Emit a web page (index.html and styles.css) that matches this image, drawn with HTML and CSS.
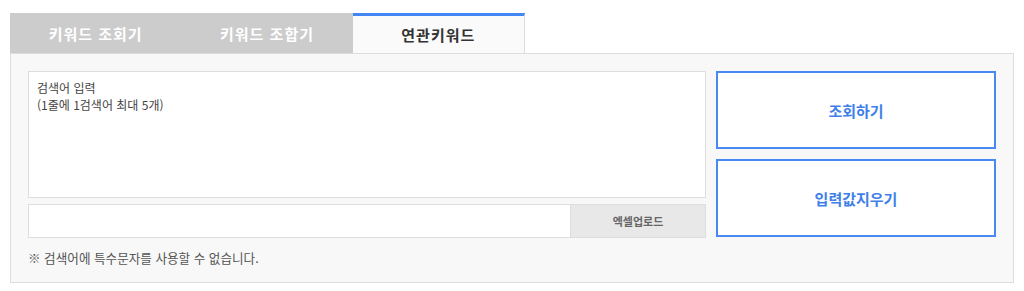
FILE: index.html
```html
<!DOCTYPE html>
<html lang="ko">
<head>
<meta charset="utf-8">
<link rel="stylesheet" href="styles.css">
</head>
<body>
<div class="wrap">
  <div class="tabs">
    <div class="tab">키워드 조회기</div>
    <div class="tab">키워드 조합기</div>
    <div class="tab active">연관키워드</div>
  </div>
  <div class="panel">
    <div class="row">
      <div class="left">
        <textarea class="keywords" placeholder="검색어 입력&#10;(1줄에 1검색어 최대 5개)"></textarea>
        <div class="upload">
          <div class="file"></div>
          <div class="excel">엑셀업로드</div>
        </div>
      </div>
      <div class="right">
        <div class="btn">조회하기</div>
        <div class="btn">입력값지우기</div>
      </div>
    </div>
    <p class="notice">※ 검색어에 특수문자를 사용할 수 없습니다.</p>
  </div>
</div>
</body>
</html>
```
FILE: styles.css
```css
* { box-sizing: border-box; }
html, body { margin: 0; padding: 0; background: #fff; }
body { font-family: "Noto Sans CJK KR", "Noto Sans", sans-serif; color: #444; }
.wrap { padding: 13px 10px 0 10px; }
.tabs { display: flex; width: 515px; height: 40px; }
.tab {
  flex: 1;
  background: #cccccc;
  color: #fff;
  font-size: 15px;
  font-weight: 700;
  display: flex;
  align-items: center;
  justify-content: center;
  letter-spacing: 1px;
}
.tab.active {
  background: #fafafa;
  color: #333;
  border-top: 3px solid #4285f4;
  border-right: 1px solid #dddddd;
}
.panel {
  width: 1004px;
  height: 230px;
  background: #f8f8f8;
  border: 1px solid #dddddd;
  padding: 17px 17px 0 17px;
}
.row { display: flex; gap: 10px; }
.left { width: 678px; display: flex; flex-direction: column; gap: 6px; }
.keywords {
  display: block;
  width: 100%;
  height: 127px;
  margin: 0;
  border: 1px solid #dddddd;
  background: #fff;
  resize: none;
  padding: 7px 8px;
  font-family: "Noto Sans CJK KR", "Noto Sans", sans-serif;
  font-size: 12px;
  line-height: 17px;
  color: #444;
  outline: none;
}
.keywords::placeholder { color: #444; opacity: 1; }
.upload { display: flex; height: 34px; border: 1px solid #dddddd; background: #fff; }
.file { flex: 1; }
.excel {
  width: 135px;
  background: #e8e8e8;
  border-left: 1px solid #dddddd;
  color: #666;
  font-size: 11px;
  font-weight: 700;
  display: flex;
  align-items: center;
  justify-content: center;
}
.right { width: 280px; display: flex; flex-direction: column; gap: 10px; }
.btn {
  height: 78px;
  background: #fff;
  border: 2px solid #4a89f3;
  color: #3f7fe9;
  font-size: 15px;
  font-weight: 700;
  display: flex;
  align-items: center;
  justify-content: center;
}
.notice {
  margin: 10px 0 0 0;
  font-size: 12.6px;
  line-height: 20px;
  color: #555;
}
```
